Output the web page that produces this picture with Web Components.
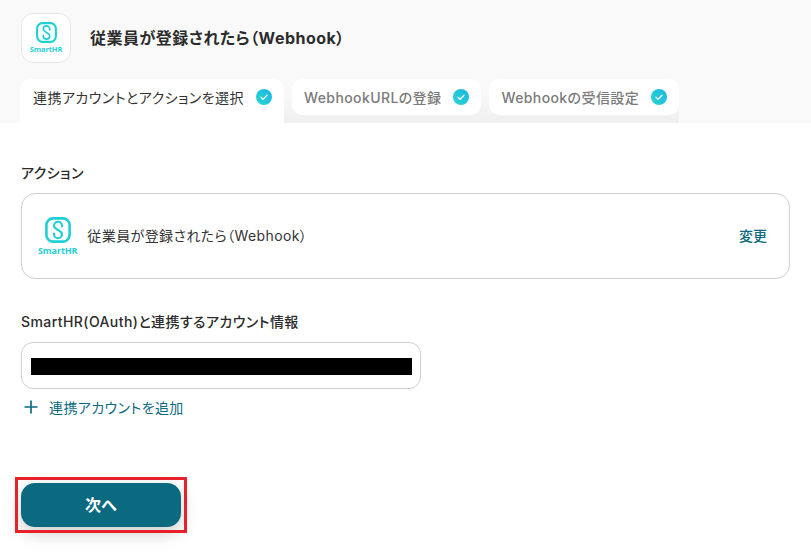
<!DOCTYPE html>
<html lang="ja">
<head>
<meta charset="utf-8">
<title>SmartHR Webhook</title>
<style>
  html, body { margin: 0; background: #fff; }
  body { font-family: Inter, "Noto Sans CJK JP", sans-serif; color: #2b2b2b; font-feature-settings: "palt"; }
</style>
</head>
<body>
<flow-page></flow-page>

<template id="logo-tpl">
  <style>
    :host { display: inline-flex; flex-direction: column; align-items: center; color: #1fcfd6; }
    svg { display: block; }
    span { font: 700 var(--logo-font, 8px)/1 "Open Sans", sans-serif; margin-top: var(--logo-gap, 3px); letter-spacing: -0.1px; }
  </style>
  <svg part="mark" viewBox="0 0 26 26" fill="none" stroke="currentColor">
    <rect x="1.4" y="1.4" width="23.2" height="23.2" rx="6.5" stroke-width="2.6"/>
    <path d="M17 9.500V8.800a4 4 0 0 0-8 0c0 2.200 1.800 3 4 4.200s4 2 4 4.200a4 4 0 0 1-8 0v-.7" stroke-width="2.100" stroke-linecap="round"/>
  </svg>
  <span>SmartHR</span>
</template>

<template id="tab-tpl">
  <style>
    :host { display: block; background: #fff; border-radius: 10px; height: 36px; box-sizing: border-box; padding: 0 12px; color: #7a7a7a; font-size: 14px; font-weight: 500; letter-spacing: .4px; white-space: nowrap; }
    :host([active]) { color: #333; height: 44px; border-radius: 10px 10px 0 0; font-weight: 400; padding-left: 13px; letter-spacing: .45px; }
    .row { display: flex; align-items: center; justify-content: space-between; height: 36px; gap: 12px; }
    svg { width: 16px; height: 16px; flex: none; }
  </style>
  <div class="row">
    <slot></slot>
    <svg viewBox="0 0 16 16">
      <defs><linearGradient id="g" x1="0" y1="1" x2="1" y2="0"><stop offset="0" stop-color="#2ad6d0"/><stop offset="1" stop-color="#1ab5e8"/></linearGradient></defs>
      <circle cx="8" cy="8" r="8" fill="url(#g)"/>
      <path d="M5 8.200 7.100 10.200 11 6.200" fill="none" stroke="#fff" stroke-width="1.300" stroke-linecap="round" stroke-linejoin="round"/>
    </svg>
  </div>
</template>

<template id="field-tpl">
  <style>
    :host { display: block; }
    .label { font-size: 14px; font-weight: 500; line-height: 20px; color: #2b2b2b; letter-spacing: .42px; margin-bottom: 10px; }
  </style>
  <div class="label"></div>
  <slot></slot>
</template>

<template id="action-tpl">
  <style>
    :host { display: flex; align-items: center; justify-content: space-between; box-sizing: border-box; height: 86px; border: 1px solid #cfcfcf; border-radius: 14px; padding: 0 22px 0 16px; font-size: 14px; color: #333; letter-spacing: .4px; }
    .left { display: flex; align-items: center; gap: 10px; }
    .text, .change { margin-bottom: 2px; }
    .change { color: #0b6a80; font-weight: 500; letter-spacing: 0; }
    smart-logo { --logo-font: 9px; --logo-gap: 3px; }
    smart-logo::part(mark) { width: 26px; height: 26px; }
  </style>
  <div class="left"><smart-logo></smart-logo><span class="text"><slot></slot></span></div>
  <span class="change">変更</span>
</template>

<template id="select-tpl">
  <style>
    :host { display: block; width: 400px; height: 47px; box-sizing: border-box; border: 1px solid #cfcfcf; border-radius: 12px; padding: 15px 8px 0 9px; }
    .bar { height: 17px; background: #000; }
  </style>
  <div class="bar"></div>
</template>

<template id="add-tpl">
  <style>
    :host { display: flex; align-items: center; gap: 11px; margin: 8px 0 0 3px; height: 20px; color: #0b6a80; font-size: 14px; letter-spacing: .4px; }
    svg { width: 14px; height: 14px; flex: none; }
  </style>
  <svg viewBox="0 0 14 14"><path d="M7 .5v13M.5 7h13" stroke="currentColor" stroke-width="1.700" fill="none"/></svg>
  <slot></slot>
</template>

<template id="next-tpl">
  <style>
    :host { display: block; position: relative; width: 160px; height: 44px; }
    button { display: block; width: 100%; height: 100%; border: 0; border-radius: 14px; background: #0b6a80; color: #fff; font: 700 16px Inter, "Noto Sans CJK JP", sans-serif; box-shadow: 0 6px 18px rgba(0,0,0,.2); padding: 0 0 2px; }
    .mark { position: absolute; left: -6px; top: -6px; width: 172px; height: 56px; box-sizing: border-box; border: 3px solid #e8202a; pointer-events: none; }
  </style>
  <button><slot></slot></button>
  <div class="mark"></div>
</template>

<template id="page-tpl">
  <style>
    :host { display: block; width: 811px; height: 556px; overflow: hidden; background: #fff; }
    header { background: #f9f9f9; height: 123px; box-sizing: border-box; padding: 13px 0 0 21px; }
    .top { display: flex; align-items: center; height: 50px; gap: 19px; }
    .app { width: 50px; height: 50px; box-sizing: border-box; background: #fff; border: 1px solid #e6e6e6; border-radius: 12px; display: flex; align-items: center; justify-content: center; }
    .app smart-logo { --logo-font: 7.500px; --logo-gap: 3px; }
    .app smart-logo::part(mark) { width: 21px; height: 21px; }
    h1 { margin: 0 0 2px; font-size: 16px; font-weight: 700; color: #2b2b2b; letter-spacing: .48px; }
    .tabs { display: inline-flex; gap: 8px; margin: 16px 0 0 -1px; height: 44px; background: linear-gradient(#f9f9f9 30%, #efefef); align-items: flex-start; }
    main { padding: 40px 0 0 21px; }
    action-card { width: 769px; }
    field-block + field-block { margin-top: 33px; }
    next-button { margin-top: 66px; }
  </style>
  <header>
    <div class="top">
      <div class="app"><smart-logo></smart-logo></div>
      <h1>従業員が登録されたら（Webhook）</h1>
    </div>
    <div class="tabs">
      <step-tab active>連携アカウントとアクションを選択</step-tab>
      <step-tab>WebhookURLの登録</step-tab>
      <step-tab>Webhookの受信設定</step-tab>
    </div>
  </header>
  <main>
    <field-block label="アクション">
      <action-card>従業員が登録されたら（Webhook）</action-card>
    </field-block>
    <field-block label="SmartHR(OAuth)と連携するアカウント情報">
      <account-select></account-select>
      <add-link>連携アカウントを追加</add-link>
    </field-block>
    <next-button>次へ</next-button>
  </main>
</template>

<script>
// small helper so every element just stamps its own template
function stamp(host, id) {
  const root = host.attachShadow({ mode: 'open' });
  root.append(document.getElementById(id).content.cloneNode(true));
  return root;
}

class SmartLogo extends HTMLElement {
  constructor() { super(); stamp(this, 'logo-tpl'); }
}
class StepTab extends HTMLElement {
  constructor() { super(); stamp(this, 'tab-tpl'); }
}
class FieldBlock extends HTMLElement {
  constructor() { super(); this.root = stamp(this, 'field-tpl'); }
  connectedCallback() {
    this.root.querySelector('.label').textContent = this.getAttribute('label');
  }
}
class ActionCard extends HTMLElement {
  constructor() { super(); stamp(this, 'action-tpl'); }
}
class AccountSelect extends HTMLElement {
  constructor() { super(); stamp(this, 'select-tpl'); }
}
class AddLink extends HTMLElement {
  constructor() { super(); stamp(this, 'add-tpl'); }
}
class NextButton extends HTMLElement {
  constructor() { super(); stamp(this, 'next-tpl'); }
}
class FlowPage extends HTMLElement {
  constructor() { super(); stamp(this, 'page-tpl'); }
}

customElements.define('smart-logo', SmartLogo);
customElements.define('step-tab', StepTab);
customElements.define('field-block', FieldBlock);
customElements.define('action-card', ActionCard);
customElements.define('account-select', AccountSelect);
customElements.define('add-link', AddLink);
customElements.define('next-button', NextButton);
customElements.define('flow-page', FlowPage);
</script>
</body>
</html>
